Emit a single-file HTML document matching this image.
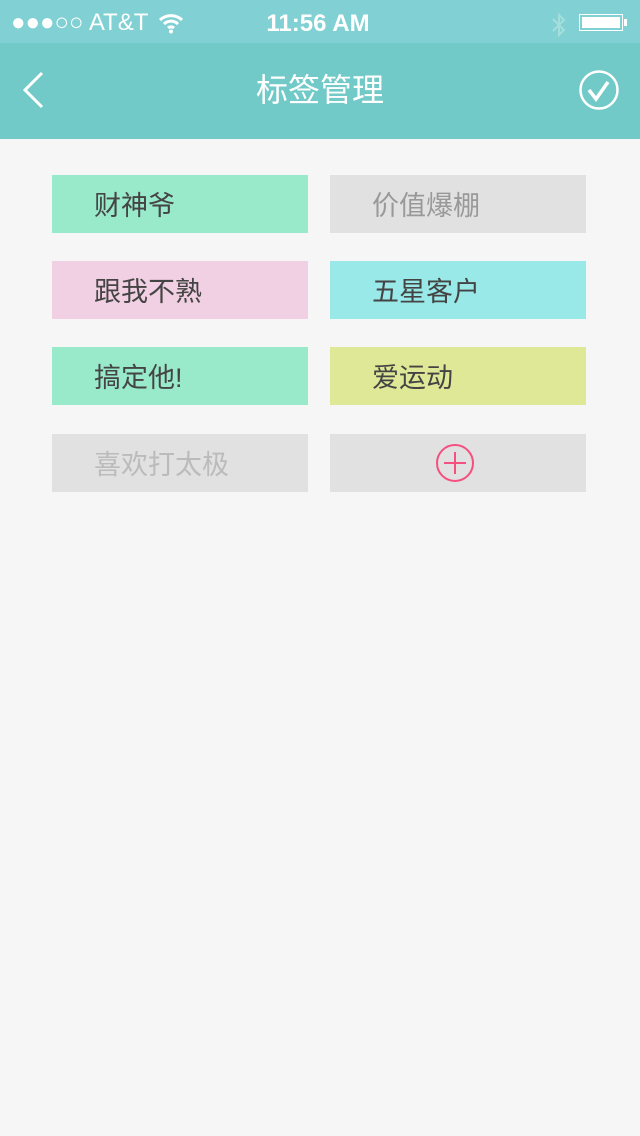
<!DOCTYPE html>
<html><head><meta charset="utf-8"><style>
body{margin:0;width:640px;height:1136px;background:#f6f6f6;font-family:"Liberation Sans","Noto Sans CJK SC",sans-serif;position:relative;overflow:hidden}
.sb{position:absolute;left:0;top:0;width:640px;height:43px;background:#81d0d3;color:#fff}
.nav{position:absolute;left:0;top:43px;width:640px;height:96px;background:#71cac8}
.title{position:absolute;top:68px;width:640px;text-align:center;color:#fff;font-size:32px;line-height:44px}
.t{position:absolute;width:256px;height:58px;font-size:27px;line-height:63px;box-sizing:border-box;padding-left:42px;color:#444}
</style></head><body>
<div class="sb">
<div style="position:absolute;left:11px;top:10px;font-size:24px;line-height:26px">●●●○○ AT&amp;T</div>
<svg style="position:absolute;left:158px;top:12px" width="26" height="22" viewBox="0 0 26 22"><path d="M2 8a16 16 0 0 1 22 0M6 12a10 10 0 0 1 14 0M10 16a4.5 4.5 0 0 1 6 0" stroke="#fff" stroke-width="3" fill="none"/><circle cx="13" cy="19.5" r="2" fill="#fff"/></svg>
<div style="position:absolute;left:0;width:636px;text-align:center;top:11px;font-size:24px;font-weight:bold;line-height:26px">11:56 AM</div>
<svg style="position:absolute;left:550px;top:12px" width="18" height="26" viewBox="0 0 18 26"><path d="M3 7l11 11-5 5V3l5 5L3 19" stroke="#a6dedd" stroke-width="2" fill="none"/></svg>
<div style="position:absolute;left:579px;top:14px;width:44px;height:17px;border:1.5px solid #fff;box-sizing:border-box;padding:2px"><div style="background:#fff;height:100%"></div></div>
<div style="position:absolute;left:624px;top:19px;width:3px;height:7px;background:#fff"></div>
</div>
<div class="nav"></div>
<svg style="position:absolute;left:18px;top:70px" width="30" height="40" viewBox="0 0 30 40"><path d="M24 3L7 20l17 17" stroke="#fff" stroke-width="3" fill="none"/></svg>
<div class="title">标签管理</div>
<svg style="position:absolute;left:578px;top:69px" width="42" height="42" viewBox="0 0 42 42"><circle cx="21" cy="21" r="18.5" stroke="#fff" stroke-width="2.5" fill="none"/><path d="M11 21l7 9 12-17" stroke="#fff" stroke-width="3.5" fill="none"/></svg>
<div class="t" style="left:52px;top:175px;background:#99e9cb">财神爷</div>
<div class="t" style="left:330px;top:175px;background:#e1e1e1;color:#999">价值爆棚</div>
<div class="t" style="left:52px;top:261px;background:#f0d0e2">跟我不熟</div>
<div class="t" style="left:330px;top:261px;background:#98e9e8">五星客户</div>
<div class="t" style="left:52px;top:347px;background:#99e9cb">搞定他!</div>
<div class="t" style="left:330px;top:347px;background:#dfe896">爱运动</div>
<div class="t" style="left:52px;top:434px;background:#e1e1e1;color:#bbb">喜欢打太极</div>
<div class="t" style="left:330px;top:434px;background:#e1e1e1"></div>
<svg style="position:absolute;left:435px;top:443px" width="40" height="40" viewBox="0 0 40 40"><circle cx="20" cy="20" r="18" stroke="#f5507f" stroke-width="2" fill="none"/><path d="M20 9v22M9 20h22" stroke="#f5507f" stroke-width="2"/></svg>
</body></html>
